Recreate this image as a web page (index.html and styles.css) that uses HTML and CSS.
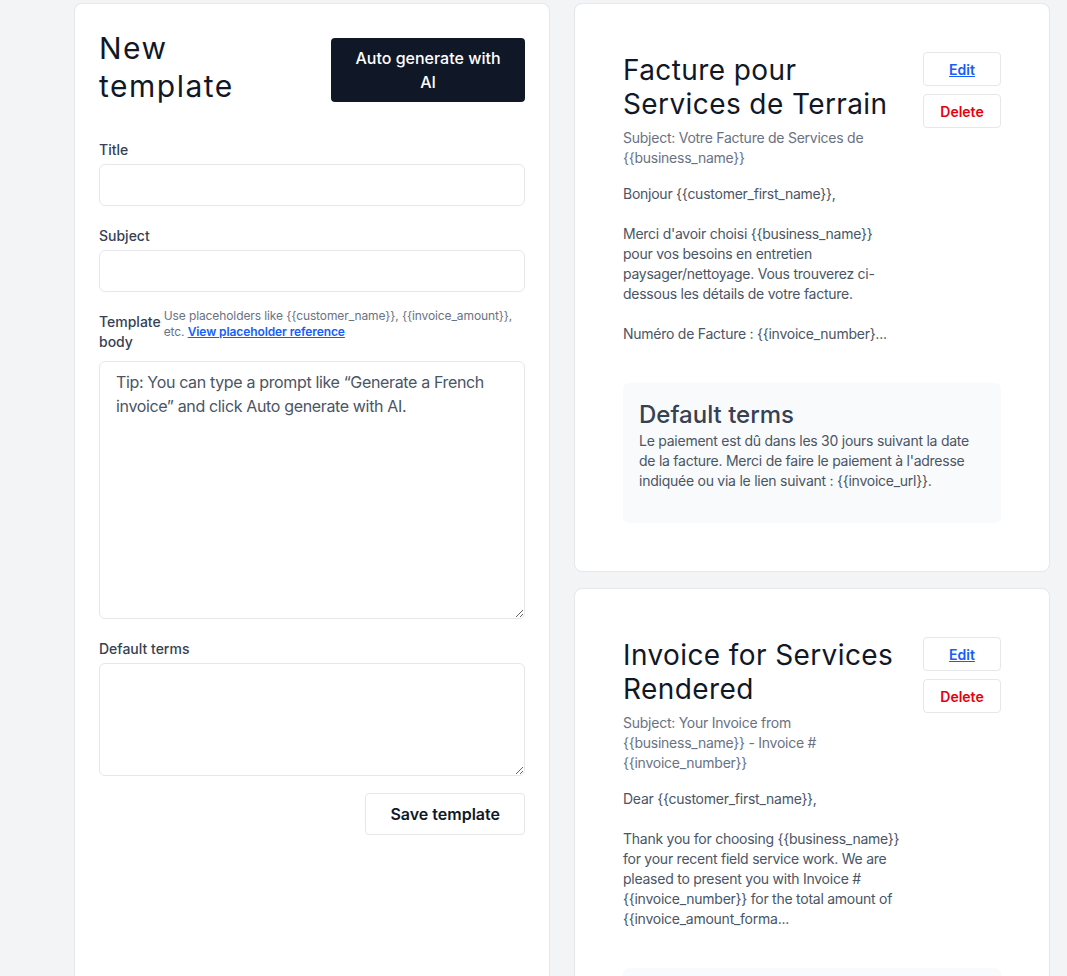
FILE: index.html
```html
<!DOCTYPE html>
<html lang="en">
<head>
  <meta charset="UTF-8">
  <title>Email templates</title>
  <link rel="stylesheet" href="styles.css">
</head>
<body>
  <div class="page">
    <div class="card form-card">
      <div class="form-header">
        <h1>New template</h1>
        <button class="ai-btn">Auto generate with AI</button>
      </div>

      <div class="field">
        <label class="label">Title</label>
        <input type="text" class="input" />
      </div>

      <div class="field">
        <label class="label">Subject</label>
        <input type="text" class="input" />
      </div>

      <div class="field">
        <div class="label-row">
          <label class="label">Template body</label>
          <p class="hint">Use placeholders like {{customer_name}}, {{invoice_amount}}, etc. <a href="#">View placeholder reference</a></p>
        </div>
        <textarea class="input body-input" placeholder="Tip: You can type a prompt like “Generate a French invoice” and click Auto generate with AI."></textarea>
      </div>

      <div class="field">
        <label class="label">Default terms</label>
        <textarea class="input terms-input"></textarea>
      </div>

      <div class="form-actions">
        <button class="save-btn">Save template</button>
      </div>
    </div>

    <div class="template-list">
      <div class="card template-card">
        <div class="template-top">
          <div class="template-info">
            <h2>Facture pour Services de Terrain</h2>
            <p class="subject">Subject: Votre Facture de Services de {{business_name}}</p>
            <p class="preview">Bonjour {{customer_first_name}},

Merci d'avoir choisi {{business_name}} pour vos besoins en entretien paysager/nettoyage. Vous trouverez ci-dessous les détails de votre facture.

Numéro de Facture : {{invoice_number}...</p>
          </div>
          <div class="template-actions">
            <button class="small-btn edit">Edit</button>
            <button class="small-btn delete">Delete</button>
          </div>
        </div>
        <div class="terms-box">
          <h3>Default terms</h3>
          <p>Le paiement est dû dans les 30 jours suivant la date de la facture. Merci de faire le paiement à l'adresse indiquée ou via le lien suivant : {{invoice_url}}.</p>
        </div>
      </div>

      <div class="card template-card">
        <div class="template-top">
          <div class="template-info">
            <h2>Invoice for Services Rendered</h2>
            <p class="subject">Subject: Your Invoice from {{business_name}} - Invoice # {{invoice_number}}</p>
            <p class="preview">Dear {{customer_first_name}},

Thank you for choosing {{business_name}} for your recent field service work. We are pleased to present you with Invoice # {{invoice_number}} for the total amount of {{invoice_amount_forma...</p>
          </div>
          <div class="template-actions">
            <button class="small-btn edit">Edit</button>
            <button class="small-btn delete">Delete</button>
          </div>
        </div>
        <div class="terms-box">
          <h3>Default terms</h3>
          <p>Payment is due within 30 days of the invoice date. Please pay at the address provided or via the following link: {{invoice_url}}.</p>
        </div>
      </div>
    </div>
  </div>
</body>
</html>
```

FILE: styles.css
```css
* {
  box-sizing: border-box;
  margin: 0;
  padding: 0;
}

body {
  background: #f3f4f6;
  font-family: Inter, 'Noto Sans', sans-serif;
  color: #101828;
  padding: 3px 17px 0 74px;
}

.page {
  display: grid;
  grid-template-columns: 476px 476px;
  gap: 24px;
  align-items: stretch;
}

.card {
  background: #fff;
  border: 1px solid #e5e7eb;
  border-radius: 8px;
}

/* left form */

.form-card {
  padding: 24px;
}

.form-header {
  display: grid;
  grid-template-columns: 1fr 194px;
  gap: 38px;
  margin-bottom: 35px;
}

.form-header h1 {
  font-size: 30px;
  line-height: 38px;
  font-weight: 400;
  letter-spacing: 1.5px;
  color: #101828;
  padding-top: 1px;
}

.ai-btn {
  align-self: start;
  margin-top: 10px;
  background: #101828;
  color: #fff;
  border: none;
  border-radius: 4px;
  padding: 8px 24px;
  font-family: inherit;
  font-size: 16px;
  line-height: 24px;
  font-weight: 500;
}

.field {
  margin-bottom: 20px;
}

.label {
  display: block;
  font-size: 14px;
  line-height: 20px;
  font-weight: 500;
  color: #364153;
  margin-bottom: 4px;
}

.input {
  display: block;
  width: 100%;
  height: 42px;
  border: 1px solid #e5e7eb;
  border-radius: 6px;
  background: #fff;
  font-family: inherit;
  font-size: 16px;
  line-height: 24px;
  padding: 8px 16px;
  color: #101828;
}

.label-row {
  display: flex;
  align-items: flex-start;
  gap: 3px;
  margin-bottom: 9px;
}

.label-row .label {
  margin-bottom: 0;
  flex-shrink: 0;
  width: min-content;
}

.hint {
  font-size: 12px;
  line-height: 16px;
  letter-spacing: -0.1px;
  color: #6a7282;
  margin-top: -4px;
}

.hint a {
  color: #155dfc;
  font-weight: 600;
}

.body-input {
  height: 258px;
  resize: vertical;
  letter-spacing: -0.35px;
}

.body-input::placeholder {
  color: #4a5565;
  opacity: 1;
}

.terms-input {
  height: 113px;
  resize: vertical;
}

.form-actions {
  display: flex;
  justify-content: flex-end;
  margin-top: -3px;
}

.save-btn {
  background: #fff;
  border: 1px solid #e5e7eb;
  border-radius: 4px;
  height: 42px;
  padding: 0 24px;
  font-family: inherit;
  font-size: 16px;
  font-weight: 600;
  color: #101828;
}

/* template list */

.template-list {
  display: flex;
  flex-direction: column;
  gap: 16px;
}

.template-card {
  padding: 48px;
}

.template-top {
  display: flex;
  gap: 20px;
}

.template-info {
  flex: 1;
}

.template-info h2 {
  font-size: 28px;
  line-height: 34px;
  font-weight: 400;
  letter-spacing: 0.4px;
  color: #101828;
  padding-top: 1px;
  margin-bottom: 7px;
}

.subject {
  font-size: 14px;
  line-height: 20px;
  letter-spacing: -0.25px;
  color: #6a7282;
  margin-bottom: 16px;
}

.preview {
  font-size: 14px;
  line-height: 20px;
  letter-spacing: -0.25px;
  color: #4a5565;
  white-space: pre-line;
}

.template-actions {
  width: 78px;
  display: flex;
  flex-direction: column;
  gap: 8px;
}

.small-btn {
  height: 34px;
  background: #fff;
  border: 1px solid #e5e7eb;
  border-radius: 4px;
  font-family: inherit;
  font-size: 14px;
  font-weight: 600;
}

.edit {
  color: #155dfc;
  text-decoration: underline;
}

.delete {
  color: #e7000b;
}

.terms-box {
  margin-top: 39px;
  background: #f9fafb;
  border-radius: 6px;
  padding: 16px 16px 32px;
}

.terms-box h3 {
  font-size: 24px;
  line-height: 32px;
  font-weight: 500;
  color: #364153;
}

.terms-box p {
  font-size: 14px;
  line-height: 20px;
  letter-spacing: -0.25px;
  color: #4a5565;
}
```
